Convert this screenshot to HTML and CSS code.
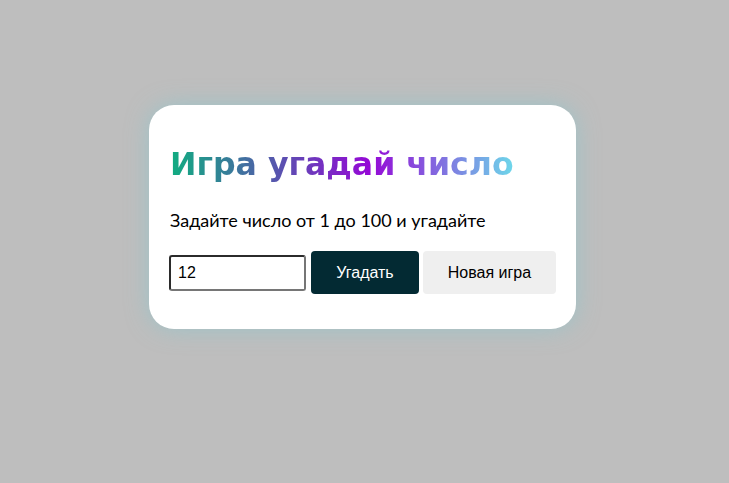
FILE: index.html
```html
<!DOCTYPE html>
<html lang="ru">
<head>
<meta charset="utf-8">
<title>Игра угадай число</title>
<link rel="stylesheet" href="styles.css">
</head>
<body>
<div class="page">
  <div class="card">
    <h1 class="title">Игра угадай число</h1>
    <p class="hint">Задайте число от 1 до 100 и угадайте</p>
    <div class="controls">
      <input class="field" type="text" value="12">
      <button class="btn btn-guess">Угадать</button>
      <button class="btn btn-new">Новая игра</button>
    </div>
  </div>
</div>
</body>
</html>
```

FILE: styles.css
```css
html, body {
  margin: 0;
  padding: 0;
  height: 100%;
}
body {
  background: #bebebe;
}
.page {
  display: flex;
  justify-content: flex-start;
  padding-top: 105px;
  padding-left: 149px;
}
.card {
  width: 387px;
  background: #ffffff;
  border-radius: 25px;
  padding: 20px 20px 35px 20px;
  box-shadow: 0 0 22px rgba(130, 200, 210, 0.55);
}
.title {
  display: inline-block;
  margin: 20px 0 26px 1px;
  font-family: "DejaVu Sans", Verdana, sans-serif;
  font-weight: bold;
  font-size: 31.6px;
  line-height: 38px;
  background: linear-gradient(90deg, #10ad80 0%, #9508d6 58%, #6dd8ea 100%);
  -webkit-background-clip: text;
  background-clip: text;
  color: transparent;
}
.hint {
  margin: 0 0 20px 1px;
  font-family: Lato, "Open Sans", sans-serif;
  font-size: 18px;
  line-height: 22px;
  color: #000;
}
.controls {
  display: flex;
  align-items: center;
  gap: 4px;
}
.field {
  box-sizing: border-box;
  width: 137px;
  height: 36px;
  margin-right: 1px;
  padding: 0 7px;
  border-width: 2px;
  border-style: solid;
  border-top-color: #2b2b2b;
  border-left-color: #2b2b2b;
  border-right-color: #767676;
  border-bottom-color: #767676;
  border-radius: 3px;
  font-family: "Liberation Sans", Arial, sans-serif;
  font-size: 16px;
  color: #000;
  background: #fff;
  outline: none;
}
.btn {
  box-sizing: border-box;
  height: 43px;
  padding: 0;
  border: none;
  border-radius: 4px;
  font-family: "Liberation Sans", Arial, sans-serif;
  font-size: 16px;
  white-space: nowrap;
}
.btn-guess {
  width: 108px;
  background: #032a33;
  color: #ffffff;
}
.btn-new {
  width: 133px;
  background: #efefef;
  color: #000;
}
```
